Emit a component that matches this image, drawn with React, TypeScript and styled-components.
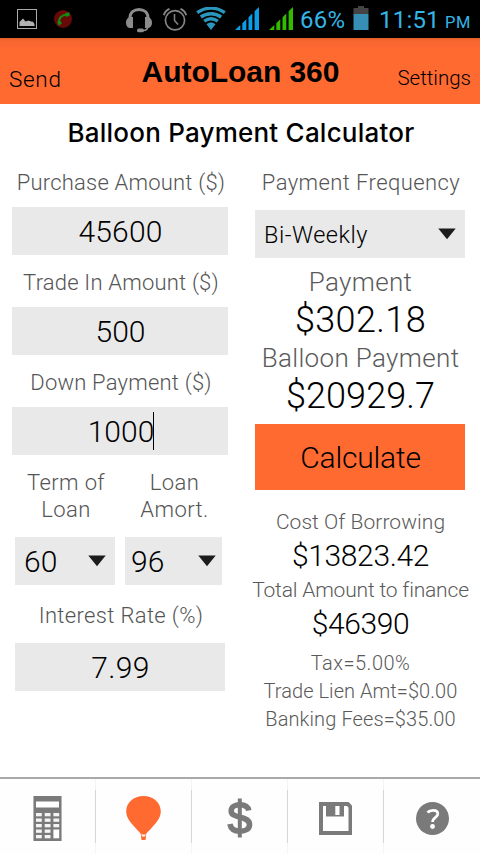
import React from 'react';
import styled, { createGlobalStyle } from 'styled-components';

const ORANGE = '#ff6a30';
const GREY = '#7a7a7a';
const BLUE = '#33b5e5';

const GlobalStyle = createGlobalStyle`
  * { box-sizing: border-box; }
  body { margin: 0; background: #fff; }
`;

const Screen = styled.div`
  width: 480px;
  height: 854px;
  display: flex;
  flex-direction: column;
  background: #fff;
  overflow: hidden;
  font-family: Roboto, 'Liberation Sans', sans-serif;
  font-weight: 300;
  color: #000;
`;

const StatusBar = styled.div`
  height: 38px;
  flex: none;
  display: flex;
  align-items: flex-start;
  background: #000;
  svg { display: block; flex: none; }
`;

const StatusIcon = styled.div<{ $gap: number; $top: number }>`
  margin-left: ${p => p.$gap}px;
  margin-top: ${p => p.$top}px;
`;

const StatusText = styled.span<{ $gap: number; $width: number; $size?: number; $track?: number }>`
  margin-left: ${p => p.$gap}px;
  width: ${p => p.$width}px;
  height: 38px;
  line-height: ${p => (p.$size ? 45 : 40)}px;
  font-size: ${p => p.$size ?? 24}px;
  font-weight: 400;
  letter-spacing: ${p => p.$track ?? 0}px;
  color: ${BLUE};
  white-space: nowrap;
`;

const Header = styled.header`
  height: 66px;
  flex: none;
  display: grid;
  grid-template-columns: 110px 1fr 110px;
  background: linear-gradient(#e35f2c 0, #f8672f 3px, ${ORANGE} 12px);
`;

const HeaderAction = styled.span<{ $right?: boolean }>`
  padding: ${p => (p.$right ? '0 9px 0 0' : '1px 0 0 9px')};
  text-align: ${p => (p.$right ? 'right' : 'left')};
  font-size: ${p => (p.$right ? 20.5 : 22.5)}px;
  letter-spacing: ${p => (p.$right ? 0 : 0.7)}px;
  line-height: 80px;
  height: 66px;
`;

const AppName = styled.h1`
  margin: 0;
  padding: 1px 0 0 1px;
  text-align: center;
  font: 700 30px/66px 'Liberation Sans', sans-serif;
  letter-spacing: -0.05px;
`;

const PageTitle = styled.h2`
  margin: 0;
  padding: 6px 0 0 2px;
  height: 51px;
  text-align: center;
  font: 500 26px/45px Inter, 'Liberation Sans', sans-serif;
  letter-spacing: 0.22px;
`;

const Columns = styled.main`
  flex: 1;
  display: grid;
  grid-template-columns: 240px 240px;
`;

const Column = styled.section`
  display: flex;
  flex-direction: column;
  align-items: center;
`;

const Label = styled.label<{ $track?: number; $top?: number; $bottom?: number }>`
  margin: ${p => p.$top ?? 14}px 0 ${p => p.$bottom ?? 11}px 2px;
  font-size: 22px;
  line-height: 27px;
  letter-spacing: ${p => p.$track ?? 0.2}px;
  text-align: center;
  color: #555;
  white-space: nowrap;
`;

const Field = styled.div<{ $width?: number; $track?: number }>`
  width: ${p => p.$width ?? 216}px;
  height: 48px;
  padding: 1px 0 0 1px;
  display: flex;
  justify-content: center;
  align-items: center;
  background: #e9e9e9;
  font-size: 30px;
  line-height: 47px;
  letter-spacing: ${p => p.$track ?? 0}px;
`;

const Caret = styled.i`
  width: 1px;
  height: 38px;
  margin: -2px -1px 0 -1px;
  background: #000;
`;

const SelectPair = styled.div`
  width: 240px;
  padding: 0 18px 0 15px;
  display: grid;
  grid-template-columns: 100px 97px;
  column-gap: 10px;
`;

const SelectGroup = styled.div`
  display: flex;
  flex-direction: column;
  align-items: center;
`;

const SelectBox = styled.div<{ $width: number; $left: number; $right: number; $size?: number; $track?: number }>`
  width: ${p => p.$width}px;
  height: 48px;
  padding: 0 ${p => p.$right}px 0 ${p => p.$left}px;
  display: flex;
  justify-content: space-between;
  align-items: center;
  background: #e9e9e9;
  font-size: ${p => p.$size ?? 30}px;
  line-height: 46px;
  letter-spacing: ${p => p.$track ?? 0}px;
`;

const SelectValue = styled.span`
  padding-top: 2px;
`;

const Line = styled.div<{ $size: number; $lh: number; $gap?: number; $track?: number; $strong?: boolean }>`
  margin-top: ${p => p.$gap ?? 0}px;
  padding-left: 1px;
  font-size: ${p => p.$size}px;
  line-height: ${p => p.$lh}px;
  letter-spacing: ${p => p.$track ?? 0}px;
  color: ${p => (p.$strong ? '#000' : '#5a5a5a')};
  white-space: nowrap;
`;

const CalculateButton = styled.button`
  width: 210px;
  height: 66px;
  margin: 8px 0 19px;
  padding: 1px 0 0 1px;
  border: 0;
  background: ${ORANGE};
  color: #000;
  font: 300 30px/65px Roboto, sans-serif;
  letter-spacing: -0.2px;
`;

const TabBar = styled.nav`
  height: 77px;
  flex: none;
  display: grid;
  grid-template-columns: repeat(5, 96px);
  border-top: 2px solid #a9a9a9;
  background: #fefefe;
`;

const Tab = styled.div<{ $last?: boolean }>`
  display: flex;
  justify-content: center;
  align-items: center;
  padding-top: 3px;
  border-right: ${p => (p.$last ? 0 : 1)}px solid;
  border-image: linear-gradient(#f3f3f3 0 12px, #d6d6d6 12px 63px, #f5f5f5 63px) 1;
`;

const Arrow = () => (
  <svg width="18" height="12" viewBox="0 0 18 12">
    <path d="M0.3 0.5H17.7L9 11.3Z" fill="#1c1c1c" />
  </svg>
);

const Signal = ({ color }: { color: string }) => (
  <svg width="24" height="23" viewBox="0 0 24 23" fill={color}>
    <path d="M0 23L5.3 18V23ZM7.3 16.2L11.3 12.3V23H7.3ZM13.5 10.2L17.3 6.4V23H13.5ZM19.6 4.2L24 0V23H19.6Z" />
  </svg>
);

const PictureIcon = () => (
  <svg width="20" height="20" viewBox="0 0 20 20">
    <rect x="0.5" y="0.5" width="19" height="19" fill="none" stroke="#aaa" />
    <path d="M2.5 17V13L5 10.500L6 9.500L8.5 12.500L11.500 11.5L14 12.500L16 12.800L17.5 15V17Z" fill="#b2b2b2" />
  </svg>
);

const CallIcon = () => (
  <svg width="18" height="18" viewBox="0 0 18 18">
    <circle cx="9" cy="9" r="9" fill="#670909" />
    <path d="M5.2 13.5C4.3 8.5 7.5 4.5 13.2 4.8" fill="none" stroke="#128c12" strokeWidth="2" />
    <path d="M3 12L6.2 10.8L8 13.3L5 15.8ZM11 3.2L15.2 2.2L15.8 5.5L12.2 7Z" fill="#128c12" />
  </svg>
);

const HeadsetIcon = () => (
  <svg width="26" height="25" viewBox="0 0 26 25">
    <path d="M4 12V10C4 4.5 8 1.5 13 1.5S22 4.5 22 10V12" fill="none" stroke="#8c8c8c" strokeWidth="3" />
    <path d="M7 9V20H4C1.5 20 0 17.5 0 14.5S2 9 4.5 9ZM19 9V20H22C24.5 20 26 17.5 26 14.5S24 9 21.5 9Z" fill="#8c8c8c" />
    <path d="M22 18C22 21.5 20 22.5 17 22.5" fill="none" stroke="#8c8c8c" strokeWidth="1.6" />
    <rect x="11" y="20.5" width="7" height="3.8" rx="1.9" fill="#8c8c8c" />
  </svg>
);

const AlarmIcon = () => (
  <svg width="24" height="23" viewBox="0 0 24 23" fill="none" stroke="#858585">
    <circle cx="12" cy="12.3" r="9.6" strokeWidth="1.7" />
    <path d="M11.5 6V12.5L15 16.5" strokeWidth="1.5" />
    <path d="M0.7 7.2C1.6 4.5 3.7 2 6.5 0.8M17.5 0.8C20.3 2 22.4 4.5 23.3 7.2" strokeWidth="1.8" />
  </svg>
);

const WifiIcon = () => (
  <svg width="30" height="23" viewBox="0 0 30 23" fill="none" stroke="#2a96bd" strokeWidth="3.4">
    <path d="M1.2 5.7C9.5 -0.4 20.5 -0.4 28.8 5.7" />
    <path d="M4.8 10C11 5.6 19 5.6 25.2 10" />
    <path d="M8.2 14.2C12.4 11.3 17.6 11.3 21.8 14.2" />
    <path d="M10.5 17.3C13.2 15 16.8 15 19.5 17.3L15 23Z" fill="#2a96bd" stroke="none" />
  </svg>
);

const BatteryIcon = () => (
  <svg width="16" height="24" viewBox="0 0 16 24">
    <path d="M5 0H11V2H15.5V8H0.5V2H5Z" fill="#444" />
    <rect x="0.5" y="8" width="15" height="16" fill="#378fb5" />
  </svg>
);

const CalculatorIcon = () => (
  <svg width="29" height="45" viewBox="0 0 29 45">
    <rect width="29" height="45" fill="#b5b5b5" />
    <rect x="1" width="27" height="45" fill={GREY} />
    <rect x="3" y="5.5" width="23" height="6" fill="#fff" />
    {[17, 22.5, 28, 33.5, 39].map((y, row) =>
      [3, 11.7, 20.4].map((x, col) =>
        col === 2 && row > 2 ? null : <rect key={`${x}-${y}`} x={x} y={y} width="5.8" height="3.3" fill="#f4f4f4" />
      )
    )}
    <rect x="20.4" y="33.5" width="5.8" height="8.8" fill="#fff" />
  </svg>
);

const BalloonIcon = () => (
  <svg width="35" height="45" viewBox="0 0 35 45">
    <path
      d="M17.5 0C27.5 0 34.8 6.5 34.8 15.5C34.8 22 30 27 25.500 32C22.500 35.300 20.800 36.800 19.8 38.5H15.2C14.200 36.800 12.500 35.300 9.500 32C5 27 0.2 22 0.2 15.5C0.2 6.5 7.5 0 17.5 0Z"
      fill={ORANGE}
    />
    <path d="M15.2 38.5L15.8 41M19.8 38.5L19.2 41" stroke={ORANGE} strokeWidth="0.8" />
    <path d="M15 40.5H20L19.5 44H15.5Z" fill={ORANGE} />
  </svg>
);

const DollarIcon = () => (
  <svg width="26" height="40" viewBox="0 0 26 40" fill="none" stroke={GREY}>
    <path
      d="M21.8 12.5C21 8.8 18 6.700 13 6.700C8 6.700 4.2 8.8 4.2 12.7C4.2 16.5 7 17.7 12.5 19C18.5 20.5 22.5 22 22.5 26.5C22.5 31 18.5 33.2 13.2 33.2C7.5 33.2 3.8 30.8 2.9 26"
      strokeWidth="5.6"
    />
    <path d="M12.8 0.5V39.5" strokeWidth="4" />
  </svg>
);

const FloppyIcon = () => (
  <svg width="33" height="33" viewBox="0 0 33 33">
    <path d="M0 0H29.5L33 3.5V33H0Z" fill={GREY} />
    <path d="M4 4H7V14.5H25V4H28L29.5 5.5V29H4Z" fill="#fff" />
    <rect x="16.3" y="4" width="4.2" height="9" fill="#fff" />
  </svg>
);

const HelpIcon = () => (
  <svg width="33" height="33" viewBox="0 0 33 33">
    <circle cx="16.5" cy="16.5" r="16.5" fill={GREY} />
    <path d="M11.5 10.5C13 8.8 15 8.4 17.3 8.4C19.8 8.4 21.8 9.7 21.8 12C21.8 15.3 16.5 15.5 16.5 20" fill="none" stroke="#fff" strokeWidth="2.8" />
    <circle cx="16.5" cy="24.5" r="2.4" fill="#fff" />
  </svg>
);

export default function App() {
  return (
    <Screen>
      <GlobalStyle />
      <StatusBar>
        <StatusIcon $gap={17} $top={9}><PictureIcon /></StatusIcon>
        <StatusIcon $gap={17} $top={10}><CallIcon /></StatusIcon>
        <StatusIcon $gap={54} $top={8}><HeadsetIcon /></StatusIcon>
        <StatusIcon $gap={11} $top={8}><AlarmIcon /></StatusIcon>
        <StatusIcon $gap={9} $top={7}><WifiIcon /></StatusIcon>
        <StatusIcon $gap={9} $top={7}><Signal color="#0b9de6" /></StatusIcon>
        <StatusIcon $gap={10} $top={7}><Signal color="#35b800" /></StatusIcon>
        <StatusText $gap={7} $width={45} $track={0.3}>66%</StatusText>
        <StatusIcon $gap={8} $top={6}><BatteryIcon /></StatusIcon>
        <StatusText $gap={10} $width={61} $track={0.2}>11:51</StatusText>
        <StatusText $gap={5} $width={28} $size={16.5} $track={0.5}>PM</StatusText>
      </StatusBar>

      <Header>
        <HeaderAction>Send</HeaderAction>
        <AppName>AutoLoan 360</AppName>
        <HeaderAction $right>Settings</HeaderAction>
      </Header>

      <PageTitle>Balloon Payment Calculator</PageTitle>

      <Columns>
        <Column>
          <Label>Purchase Amount ($)</Label>
          <Field $track={0.2}>45600</Field>
          <Label>Trade In Amount ($)</Label>
          <Field>500</Field>
          <Label>Down Payment ($)</Label>
          <Field>1000<Caret /></Field>
          <SelectPair>
            <SelectGroup>
              <Label $bottom={14} $track={0.4}>Term of<br />Loan</Label>
              <SelectBox $width={100} $left={9} $right={9}><SelectValue>60</SelectValue><Arrow /></SelectBox>
            </SelectGroup>
            <SelectGroup>
              <Label $bottom={14} $track={0.4}>Loan<br />Amort.</Label>
              <SelectBox $width={97} $left={6} $right={6}><SelectValue>96</SelectValue><Arrow /></SelectBox>
            </SelectGroup>
          </SelectPair>
          <Label $top={17} $bottom={14} $track={0.35}>Interest Rate (%)</Label>
          <Field $width={210} $track={0.4}>7.99</Field>
        </Column>

        <Column>
          <Label $bottom={14} $track={0.42}>Payment Frequency</Label>
          <SelectBox $width={210} $left={9} $right={9} $size={23.5} $track={0.5}><SelectValue>Bi-Weekly</SelectValue><Arrow /></SelectBox>
          <Line $size={26} $lh={30} $gap={9} $track={0.35}>Payment</Line>
          <Line $size={36} $lh={40} $gap={3} $track={0.4} $strong>$302.18</Line>
          <Line $size={26} $lh={30} $gap={3} $track={0.35}>Balloon Payment</Line>
          <Line $size={36} $lh={40} $gap={3} $track={0.1} $strong>$20929.7</Line>
          <CalculateButton>Calculate</CalculateButton>
          <Line $size={21} $lh={26} $track={0.05}>Cost Of Borrowing</Line>
          <Line $size={30} $lh={34} $gap={4} $track={-0.35} $strong>$13823.42</Line>
          <Line $size={21} $lh={26} $gap={4} $track={-0.18}>Total Amount to finance</Line>
          <Line $size={30} $lh={34} $gap={4} $track={-0.4} $strong>$46390</Line>
          <Line $size={20} $lh={28} $gap={8} $track={0.5}>Tax=5.00%</Line>
          <Line $size={20} $lh={28} $track={0.05}>Trade Lien Amt=$0.00</Line>
          <Line $size={20} $lh={28} $track={0.1}>Banking Fees=$35.00</Line>
        </Column>
      </Columns>

      <TabBar>
        <Tab><CalculatorIcon /></Tab>
        <Tab><BalloonIcon /></Tab>
        <Tab><DollarIcon /></Tab>
        <Tab><FloppyIcon /></Tab>
        <Tab $last><HelpIcon /></Tab>
      </TabBar>
    </Screen>
  );
}
